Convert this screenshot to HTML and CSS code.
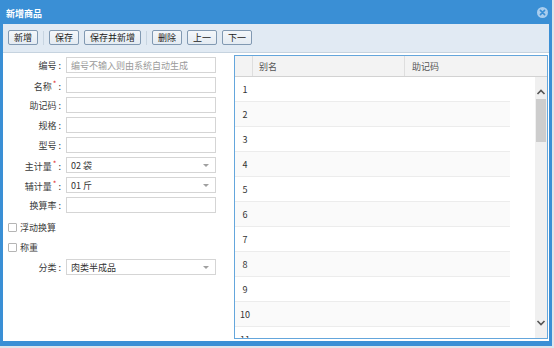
FILE: index.html
```html
<!DOCTYPE html>
<html lang="zh-CN">
<head>
<meta charset="utf-8">
<title>新增商品</title>
<link rel="stylesheet" href="styles.css">
</head>
<body>
<div class="win">
  <div class="titlebar">
    <span class="title">新增商品</span>
    <span class="close">
      <svg width="11" height="11" viewBox="0 0 11 11"><circle cx="5.5" cy="5.5" r="5.5" fill="#a9cdee"/><path d="M3.4 3.4 L7.6 7.6 M7.6 3.4 L3.4 7.6" stroke="#3b8fd5" stroke-width="1.6" stroke-linecap="round"/></svg>
    </span>
  </div>
  <div class="content">
    <div class="toolbar">
      <button class="btn">新增</button>
      <span class="sep"></span>
      <button class="btn">保存</button>
      <button class="btn">保存并新增</button>
      <span class="sep"></span>
      <button class="btn">删除</button>
      <button class="btn">上一</button>
      <button class="btn">下一</button>
    </div>
    <div class="main">
      <div class="form">
        <div class="row"><label class="lbl">编号 :</label><input class="inp" placeholder="编号不输入则由系统自动生成"></div>
        <div class="row"><label class="lbl">名称<i class="req">*</i> :</label><input class="inp"></div>
        <div class="row"><label class="lbl">助记码 :</label><input class="inp"></div>
        <div class="row"><label class="lbl">规格 :</label><input class="inp"></div>
        <div class="row"><label class="lbl">型号 :</label><input class="inp"></div>
        <div class="row"><label class="lbl">主计量<i class="req">*</i> :</label><div class="sel"><span>02 袋</span><i class="arr"></i></div></div>
        <div class="row"><label class="lbl">辅计量<i class="req">*</i> :</label><div class="sel"><span>01 斤</span><i class="arr"></i></div></div>
        <div class="row"><label class="lbl">换算率 :</label><input class="inp"></div>
        <div class="row cbrow first"><span class="cb"></span><span>浮动换算</span></div>
        <div class="row cbrow"><span class="cb"></span><span>称重</span></div>
        <div class="row"><label class="lbl">分类 :</label><div class="sel"><span>肉类半成品</span><i class="arr"></i></div></div>
      </div>
      <div class="grid">
        <div class="ghead">
          <div class="hc hnum"></div>
          <div class="hc h1">别名</div>
          <div class="hc h2">助记码</div>
        </div>
        <div class="gbody">
          <div class="rows">
            <div class="gr"><span class="num">1</span></div>
            <div class="gr alt"><span class="num">2</span></div>
            <div class="gr"><span class="num">3</span></div>
            <div class="gr alt"><span class="num">4</span></div>
            <div class="gr"><span class="num">5</span></div>
            <div class="gr alt"><span class="num">6</span></div>
            <div class="gr"><span class="num">7</span></div>
            <div class="gr alt"><span class="num">8</span></div>
            <div class="gr"><span class="num">9</span></div>
            <div class="gr alt"><span class="num">10</span></div>
            <div class="gr"><span class="num">11</span></div>
          </div>
          <div class="fill"></div>
          <div class="scroll">
            <svg class="chev" width="12" height="14" viewBox="0 0 12 14"><path d="M2.5 9 L6 5.5 L9.5 9" fill="none" stroke="#555" stroke-width="1.6"/></svg>
            <div class="thumb"></div>
            <div class="track"></div>
            <svg class="chev" width="12" height="14" viewBox="0 0 12 14"><path d="M2.5 5 L6 8.5 L9.5 5" fill="none" stroke="#555" stroke-width="1.6"/></svg>
          </div>
        </div>
      </div>
    </div>
  </div>
</div>
</body>
</html>
```
FILE: styles.css
```css
* { box-sizing: border-box; }
html, body { margin: 0; padding: 0; }
body {
  width: 554px;
  height: 348px;
  background: #dfe5ec;
  font-family: "Noto Sans CJK SC", "Noto Sans", sans-serif;
  font-size: 9px;
  color: #333;
  overflow: hidden;
}
.win {
  width: 552px;
  height: 346px;
  background: #3a8fd5;
  display: flex;
  flex-direction: column;
}
.titlebar {
  height: 24px;
  flex: none;
  display: flex;
  align-items: center;
  justify-content: space-between;
  padding: 0 4px 0 6px;
}
.title {
  color: #fff;
  font-weight: bold;
  font-size: 9px;
  line-height: 1;
  padding-top: 2px;
}
.close { display: flex; }
.close svg { display: block; }
.content {
  flex: 1;
  margin: 0 3px 5px 3px;
  background: #fff;
  display: flex;
  flex-direction: column;
  min-height: 0;
}
.toolbar {
  height: 29px;
  flex: none;
  background: #e1eaf3;
  border-bottom: 1px solid #c6d3df;
  display: flex;
  align-items: center;
  padding: 0 0 1px 5px;
  gap: 5px;
}
.btn {
  height: 15px;
  padding: 0 5px;
  font-family: inherit;
  font-size: 9px;
  line-height: 13px;
  color: #222;
  background: linear-gradient(#f4f7fa, #e4ebf2);
  border: 1px solid #8199b2;
  border-radius: 2px;
  margin: 0;
}
.sep {
  width: 1px;
  height: 14px;
  background: #c8d5e1;
}
.main {
  flex: 1;
  display: flex;
  min-height: 0;
  padding: 2px 1px 2px 0;
}
.form {
  width: 231px;
  flex: none;
  display: flex;
  flex-direction: column;
  gap: 4px;
  padding-top: 2px;
}
.row {
  height: 16px;
  display: flex;
  align-items: center;
}
.lbl {
  width: 58px;
  text-align: right;
  margin-right: 5px;
  white-space: nowrap;
  color: #3a3a3a;
}
.req {
  font-style: normal;
  color: #e03030;
  font-size: 8px;
  vertical-align: 3px;
  margin-left: 1px;
}
.inp, .sel {
  width: 150px;
  height: 16px;
  border: 1px solid #d5d5d5;
  background: #fff;
  font-family: inherit;
  font-size: 9px;
  padding: 0 4px;
  margin: 0;
  outline: none;
  color: #333;
}
.inp::placeholder { color: #9a9a9a; }
.sel {
  display: flex;
  align-items: center;
  justify-content: space-between;
}
.arr {
  width: 0;
  height: 0;
  border-left: 3px solid transparent;
  border-right: 3px solid transparent;
  border-top: 3px solid #a0a0a0;
  margin-right: 2px;
}
.cbrow { padding-left: 5px; gap: 3px; color: #3a3a3a; }
.cbrow.first { margin-top: 2px; }
.cb {
  width: 9px;
  height: 9px;
  border: 1px solid #b5b5b5;
  background: #fff;
  border-radius: 1px;
}
.grid {
  flex: 1;
  border: 1px solid #64a6dc;
  display: flex;
  flex-direction: column;
  min-width: 0;
}
.ghead {
  height: 21px;
  flex: none;
  display: flex;
  background: #f3f3f3;
  border-bottom: 1px solid #d2d2d2;
  color: #555;
}
.hc {
  display: flex;
  align-items: center;
  border-right: 1px solid #dedede;
  padding-left: 6px;
}
.hnum { width: 18px; padding: 0; }
.h1 { width: 152px; }
.h2 { flex: 1; border-right: none; padding-left: 7px; }
.gbody {
  flex: 1;
  display: flex;
  min-height: 0;
  overflow: hidden;
}
.rows {
  width: 275px;
  flex: none;
  display: flex;
  flex-direction: column;
}
.gr {
  height: 25px;
  flex: none;
  border-bottom: 1px solid #ececec;
  display: flex;
  align-items: center;
  background: #fff;
}
.gr.alt { background: #fafafa; }
.num {
  width: 20px;
  text-align: center;
  color: #333;
}
.fill { flex: 1; }
.scroll {
  width: 12px;
  flex: none;
  background: #f0f0f0;
  display: flex;
  flex-direction: column;
  align-items: center;
  padding-top: 8px;
}
.chev { display: block; flex: none; }
.thumb {
  width: 10px;
  height: 43px;
  background: #cdcdcd;
  flex: none;
}
.track { flex: 1; }
.scroll .chev:last-child { margin-bottom: 8px; }
```
